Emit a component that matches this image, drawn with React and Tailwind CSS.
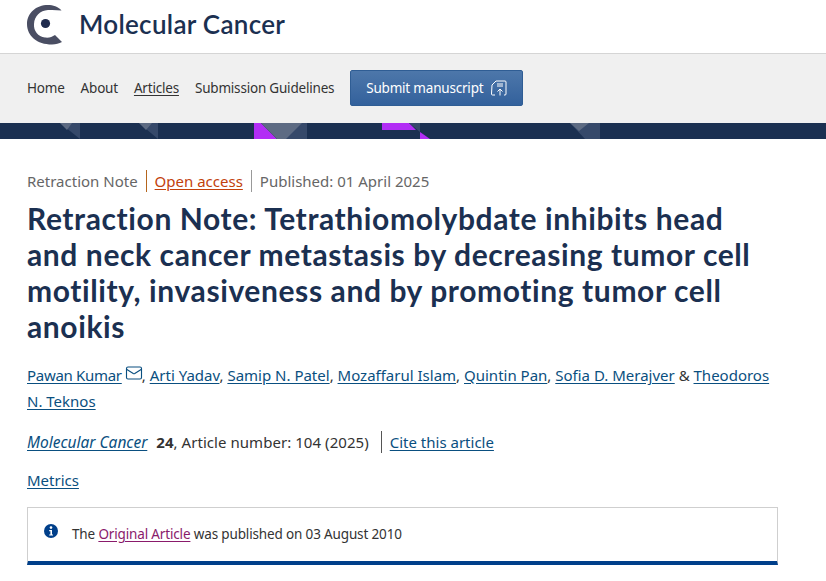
import React from "react";
import { Mail } from "lucide-react";

const Logo = () => (
  <svg width="36" height="40" viewBox="0 0 36 40" className="shrink-0">
    <path d="M34.5 5.5 C31 1.5 26 0 21 0 C9 0 0 8 0 19 C0 31 10 39.5 25 39.5 C29 39.5 32 38.5 35 37 L28 30 C25 32 22 33 18 32.5 C11 31.5 6.5 26 7 19 C7.5 11 13 5.5 21 5 C26 4.7 30.5 5 34.5 5.5 Z" fill="#4a4e63" />
    <circle cx="18.5" cy="18.5" r="4.6" fill="#1f2b4d" />
  </svg>
);

const Banner = () => (
  <svg width="826" height="16" viewBox="0 0 826 16" className="block w-full">
    <rect width="826" height="16" fill="#1b3051" />
    <polygon points="60,0 80,16 80,0" fill="#36496a" />
    <polygon points="60,0 67,7 72,0" fill="#5d6b83" />
    <polygon points="139,0 158,16 158,0" fill="#36496a" />
    <polygon points="139,0 146,7 152,0" fill="#5d6b83" />
    <polygon points="254,0 254,16 277,16 261,0" fill="#b22df5" />
    <polygon points="261,0 307,0 307,16 277,16" fill="#36496a" />
    <polygon points="261,0 277,16 286,16 302,0" fill="#5d6b83" />
    <polygon points="382,0 382,7 416,7 409,0" fill="#b22df5" />
    <polygon points="409,0 420,0 420,9" fill="#36496a" />
    <polygon points="420,9 420,16 430,16" fill="#b22df5" />
    <polygon points="570,0 600,0 600,16 585,16" fill="#36496a" />
    <polygon points="570,0 579,8 589,0" fill="#5d6b83" />
  </svg>
);

const Author = ({ children }) => (
  <a href="#" className="text-[#0a4f80] underline underline-offset-2">{children}</a>
);

export default function App() {
  return (
    <div className="bg-white h-[581px] overflow-hidden font-['Noto_Sans',sans-serif] text-[#222]">
      <header className="h-[53px] flex items-center gap-[16px] pl-[27px] pb-[4px]">
        <Logo />
        <span className="font-['Lato',sans-serif] text-[26px] font-semibold text-[#1b3051] tracking-[0.3px]">Molecular Cancer</span>
      </header>
      <nav className="h-[70px] bg-[#f0f0f0] border-t border-[#d5d5d5] flex items-center pl-[27px] pb-[1px] text-[13.5px] tracking-[-0.2px] text-[#333]">
        <a href="#">Home</a>
        <a href="#" className="ml-[16px]">About</a>
        <a href="#" className="ml-[16px] underline underline-offset-2">Articles</a>
        <a href="#" className="ml-[16px]">Submission Guidelines</a>
        <a href="#" className="ml-[16px] w-[173px] h-[36px] flex items-center justify-center gap-[8px] rounded-[2px] border border-[#2f5d94] bg-gradient-to-b from-[#4d77aa] to-[#33619c] text-white">
          Submit manuscript
          <svg width="16" height="16" viewBox="0 0 16 16" fill="none" stroke="#fff" strokeWidth="1">
            <path d="M4 15H1.5a1 1 0 0 1-1-1L1 5L5 1H14a1 1 0 0 1 1 1V14a1 1 0 0 1-1 1H13" />
            <path d="M6 4h6M6 6h6" />
            <path d="M9 15.5V9M6.5 11.5L9 9L11.5 11.5" />
          </svg>
        </a>
      </nav>
      <Banner />
      <main className="pl-[27px] pr-[48px] pt-[31px]">
        <div className="flex items-center text-[15px] leading-[22px] text-[#666]">
          <span>Retraction Note</span>
          <span className="ml-[8px] pl-[8px] border-l border-[#b5651d] text-[#c2410c] underline underline-offset-2">Open access</span>
          <span className="ml-[8px] pl-[8px] border-l border-[#999]">Published: 01 April 2025</span>
        </div>
        <h1 className="mt-[8px] font-['Lato',sans-serif] text-[30px] leading-[36px] font-bold text-[#1b3051] tracking-[0.6px] max-w-[735px]">
          Retraction Note: Tetrathiomolybdate inhibits head and neck cancer metastasis by decreasing tumor cell motility, invasiveness and by promoting tumor cell anoikis
        </h1>
        <p className="mt-[18px] text-[15px] leading-[26px] text-[#333] max-w-[751px]">
          <a href="#" className="text-[#0a4f80] underline underline-offset-2 tracking-[-0.3px]">Pawan Kumar</a>
          <Mail size={18} strokeWidth={1.5} className="inline-block text-[#0a4f80] ml-[3px] -mr-[1px] -my-[4px] relative -top-[4px]" />
          <span>, </span><Author>Arti Yadav</Author><span>, </span><Author>Samip N. Patel</Author><span>, </span><Author>Mozaffarul Islam</Author><span>, </span><Author>Quintin Pan</Author><span>, </span><Author>Sofia D. Merajver</Author><span> &amp; </span><Author>Theodoros N. Teknos</Author>
        </p>
        <div className="mt-[17px] flex items-center text-[15px] leading-[22px] text-[#333]">
          <a href="#" className="italic text-[15.5px] text-[#0a4f80] underline underline-offset-2">Molecular Cancer</a>
          <span className="ml-[9px] tracking-[0.05px]"><b>24</b>, Article number: 104 (2025)</span>
          <a href="#" className="ml-[12px] pl-[8px] border-l border-[#555] text-[#0a4f80] underline underline-offset-2">Cite this article</a>
        </div>
        <a href="#" className="block mt-[16px] text-[15px] leading-[22px] text-[#0a4f80] underline underline-offset-2">Metrics</a>
        <div className="mt-[16px] w-[751px] h-[58px] border border-[#cfcfcf] border-b-[4px] border-b-[#003f8a] flex items-start pl-[16px] pt-[16px] text-[13.5px] tracking-[-0.15px] leading-[20px] text-[#333]">
          <svg width="14" height="14" viewBox="0 0 14 14" className="shrink-0">
            <circle cx="7" cy="7" r="7" fill="#003f8a" />
            <circle cx="7" cy="3.6" r="1.3" fill="#fff" />
            <path d="M5.2 6h2.8v4.4h1v1.2H5.2v-1.2h1.2V7.2H5.2z" fill="#fff" />
          </svg>
          <span className="ml-[14px]">The <a href="#" className="text-[#8a1a6b] underline underline-offset-2">Original Article</a> was published on 03 August 2010</span>
        </div>
      </main>
    </div>
  );
}
